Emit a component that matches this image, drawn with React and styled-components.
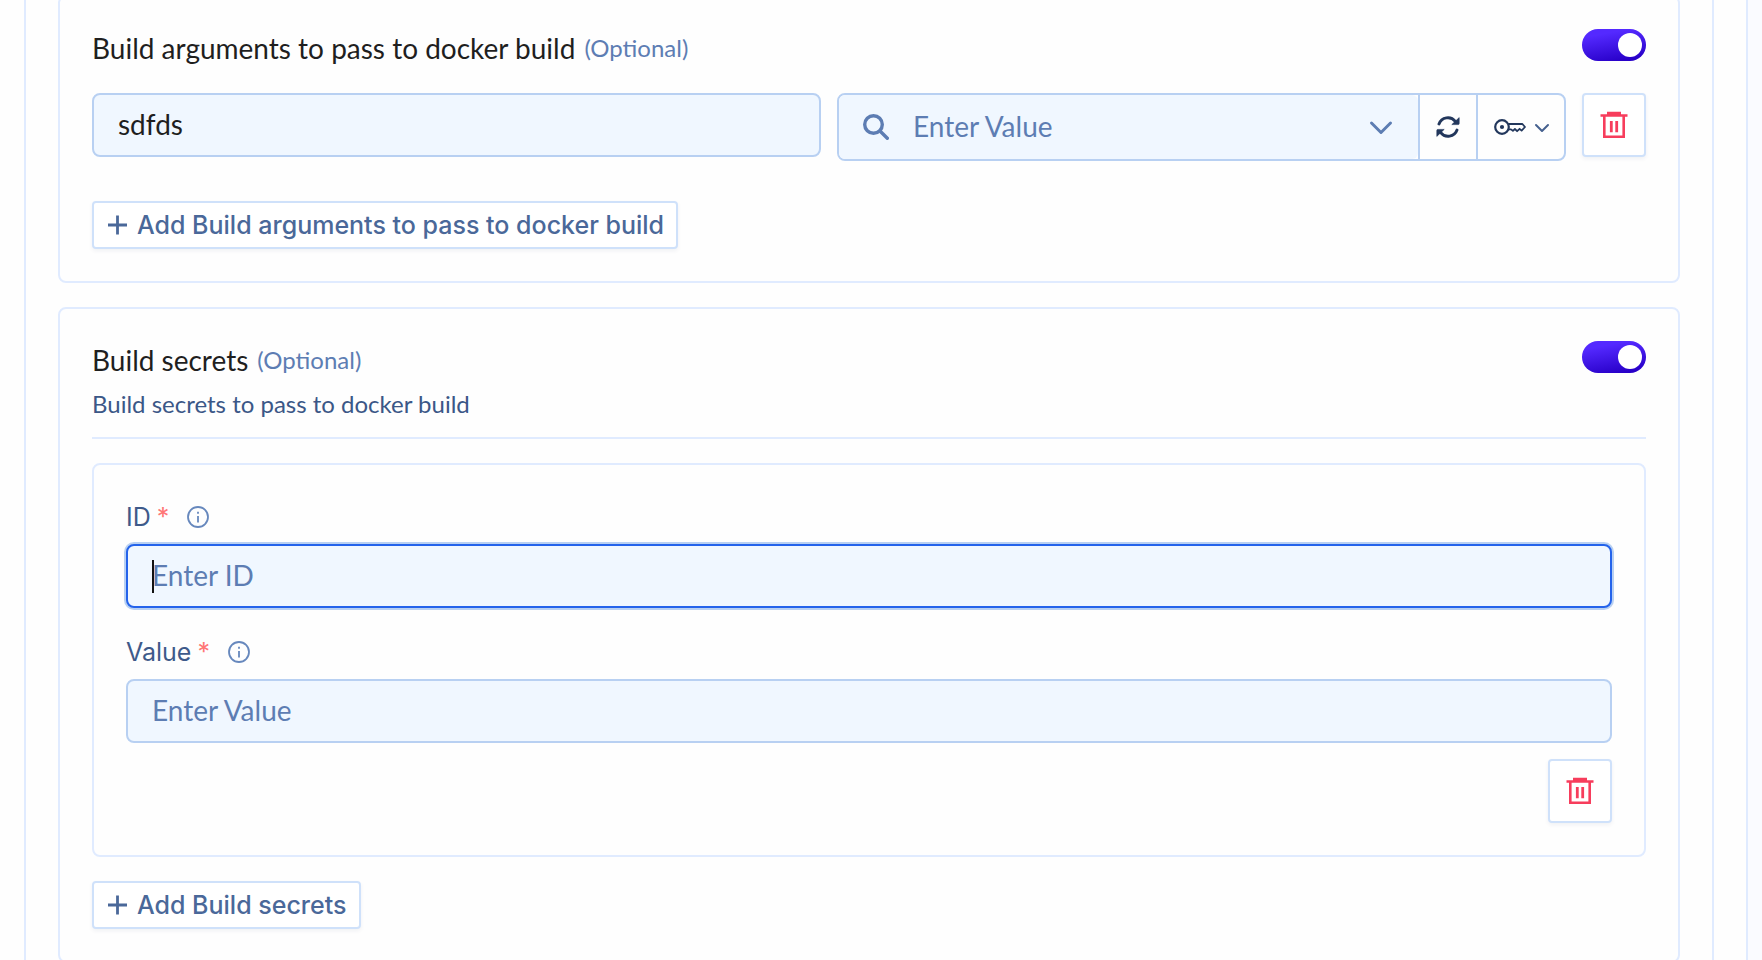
import React, { useState } from 'react';
import styled, { createGlobalStyle } from 'styled-components';

const GlobalStyle = createGlobalStyle`
  *,
  *::before,
  *::after {
    box-sizing: border-box;
  }

  html {
    scrollbar-width: none;
  }

  body {
    margin: 0;
    background: #fafbff;
    font-family: Lato, "Liberation Sans", sans-serif;
    color: #1f1f1f;
  }

  button,
  input {
    margin: 0;
    font-family: inherit;
  }
`;

const Page = styled.div`
  display: flow-root;
  min-height: 100vh;
  margin-right: 14px;
  padding: 0 32px 0 24px;
  background: #fefefe;
  border-right: 2px solid #e0ebff;
  overflow: hidden;
`;

const Panel = styled.main`
  display: flex;
  flex-direction: column;
  gap: 24px;
  /* the first card is scrolled slightly past the top edge */
  margin-top: -5px;
  padding: 0 32px 24px;
  border: 2px solid #e0ebff;
  border-width: 0 2px;
`;

const Card = styled.section`
  padding: 32px;
  border: 2px solid #e0ebff;
  border-radius: 8px;
`;

const CardHeader = styled.header`
  display: flex;
  justify-content: space-between;
  align-items: flex-start;
  margin-bottom: 24px;
  padding-bottom: ${({ $divider }) => ($divider ? '14px' : '2px')};
  border-bottom: ${({ $divider }) => ($divider ? '2px solid #e0ebff' : 'none')};
`;

const Title = styled.h2`
  display: flex;
  align-items: center;
  gap: 9px;
  margin: 0;
  font-size: 28px;
  font-weight: 400;
  line-height: 38px;
`;

const Optional = styled.span`
  font-size: 24px;
  color: #5d7db3;
`;

const Subtitle = styled.p`
  margin: 6px 0 0;
  font-size: 24px;
  line-height: 38px;
  color: #3b5787;
`;

const Toggle = styled.input`
  appearance: none;
  flex: none;
  width: 64px;
  height: 32px;
  padding: 4px;
  border-radius: 16px;
  background: #c5cfdf;
  cursor: pointer;

  &::before {
    content: "";
    display: block;
    width: 24px;
    height: 24px;
    border-radius: 50%;
    background: #fff;
  }

  &:checked {
    background: linear-gradient(170deg, #5429ff 20%, #2800c8 90%);
  }

  &:checked::before {
    margin-left: auto;
  }
`;

const ArgRow = styled.div`
  display: grid;
  grid-template-columns: 1fr 1fr auto;
  align-items: start;
  gap: 16px;
  margin-bottom: 40px;
`;

const TextInput = styled.input`
  display: block;
  width: 100%;
  height: 64px;
  padding: 0 24px 2px;
  border: 2px solid #b8d0f2;
  border-radius: 8px;
  outline: none;
  background: #f0f7ff;
  font-size: 28px;
  color: #1f1f1f;
  caret-color: transparent;

  &::placeholder {
    color: #5d7db3;
    opacity: 1;
  }

  &:focus {
    border-color: #2463eb;
    box-shadow: 0 0 0 2px #b8d0f2;
  }
`;

const InputWrap = styled.div`
  position: relative;
`;

const Caret = styled.span`
  display: none;
  position: absolute;
  top: 16px;
  left: 26px;
  width: 2px;
  height: 33px;
  background: #111;
  pointer-events: none;

  ${TextInput}:focus:placeholder-shown + & {
    display: block;
  }
`;

const Combo = styled.div`
  display: flex;
  min-width: 0;
  height: 68px;
  border: 2px solid #b8d0f2;
  border-radius: 8px;
`;

const ComboField = styled.label`
  display: flex;
  flex: 1;
  align-items: center;
  min-width: 0;
  padding: 0 25px 0 24px;
  border-radius: 6px;
  background: #f0f7ff;
  color: #5d7db3;
`;

const ComboInput = styled.input`
  flex: 1;
  min-width: 0;
  margin-left: 24px;
  padding: 0 0 2px;
  border: none;
  outline: none;
  background: none;
  font-size: 28px;
  color: #1f1f1f;

  &::placeholder {
    color: #5d7db3;
    opacity: 1;
  }
`;

const IconButton = styled.button`
  display: flex;
  flex: none;
  align-items: center;
  padding: 0;
  border: none;
  background: none;
  color: inherit;
  cursor: pointer;
`;

const ComboButton = styled(IconButton)`
  gap: 8px;
  padding: ${({ $wide }) => ($wide ? '0 14px 0 16px' : '0 16px')};
  border-left: 2px solid #b8d0f2;
  color: #22375c;
`;

const outlined = `
  border: 2px solid #cfe1fa;
  border-radius: 4px;
  background: #fff;
  box-shadow: 0 2px 4px rgba(20, 40, 80, 0.06);
  cursor: pointer;
`;

const DeleteButton = styled.button`
  display: flex;
  flex: none;
  justify-content: center;
  align-items: center;
  width: 64px;
  height: 64px;
  padding: 0;
  color: #f73d5c;
  ${outlined}
`;

const AddButton = styled.button`
  display: inline-flex;
  align-items: center;
  gap: 8px;
  height: 48px;
  padding: 0 12px;
  font-size: 25px;
  font-weight: 500;
  color: #4a6899;
  ${outlined}

  && {
    font-family: Inter, sans-serif;
  }
`;

const SecretBox = styled.div`
  display: flex;
  flex-direction: column;
  margin-bottom: 24px;
  padding: 32px;
  border: 2px solid #e0ebff;
  border-radius: 8px;
`;

const Field = styled.div`
  margin-bottom: ${({ $last }) => ($last ? '16px' : '24px')};
`;

const LabelRow = styled.div`
  display: flex;
  align-items: center;
  gap: 18px;
  height: 39px;
  margin-bottom: 8px;
  font-family: Inter, sans-serif;
  font-size: 25px;
  color: #3e5a8a;
`;

const Required = styled.span`
  margin-left: 6px;
  color: #ff7676;
`;

const InfoButton = styled(IconButton)`
  color: #6788bd;
`;

const BoxFooter = styled.div`
  display: flex;
  justify-content: flex-end;
`;

const SearchIcon = () => (
  <svg width="26" height="28" viewBox="0 0 26 28" fill="none" stroke="currentColor" strokeWidth="3.4">
    <circle cx="10.5" cy="11.5" r="8.8" />
    <path d="M17 18l7.3 7.3" strokeLinecap="round" />
  </svg>
);

const ChevronIcon = () => (
  <svg width="24" height="16" viewBox="0 0 24 16" fill="none" stroke="currentColor" strokeWidth="3">
    <path d="M2.5 4L12 13.5 21.5 4" strokeLinecap="round" strokeLinejoin="round" />
  </svg>
);

const SmallChevronIcon = () => (
  <svg width="16" height="12" viewBox="0 0 16 12" fill="none" stroke="#46618f" strokeWidth="2">
    <path d="M2 4l6 6 6-6" strokeLinecap="round" strokeLinejoin="round" />
  </svg>
);

const RefreshIcon = () => (
  <svg width="24" height="22" viewBox="0 0 24 22" fill="none">
    <path
      d="M3 8A9.4 9.4 0 0 1 19.3 5.4M21 14A9.4 9.4 0 0 1 4.7 16.6"
      stroke="currentColor"
      strokeWidth="2.9"
      strokeLinecap="round"
    />
    <path
      d="M23.2 1.6v6q0 1-1 1h-6.4zM.8 20.4v-6q0-1 1-1h6.4z"
      fill="currentColor"
      stroke="currentColor"
      strokeWidth="0.6"
      strokeLinejoin="round"
    />
  </svg>
);

const KeyIcon = () => (
  <svg width="32" height="16" viewBox="0 0 32 16" fill="none">
    <path
      d="M14.2 5H28.4L31 8l-3.4 3.6-2-1.8-2.5 2.4-2.2-2.2-2 1.8-1.9-1.4h-2.7"
      stroke="currentColor"
      strokeWidth="1.8"
      strokeLinejoin="round"
    />
    <circle cx="8" cy="8" r="6.8" stroke="currentColor" strokeWidth="2.2" />
    <circle cx="8" cy="8" r="2.1" fill="currentColor" />
  </svg>
);

const TrashIcon = () => (
  <svg width="28" height="28" viewBox="0 0 28 28" fill="currentColor">
    <path d="M7 .8h14v2.4h6.5v2.6H25V27H3V5.8H.5V3.2H7zM5.6 5.8v18.7h16.8V5.8z" fillRule="evenodd" />
    <path d="M9.9 10h2.8v11.2H9.9zM15.3 10h2.8v11.2h-2.8z" />
  </svg>
);

const PlusIcon = () => (
  <svg width="23" height="22" viewBox="0 0 23 22" stroke="currentColor" strokeWidth="2.8">
    <path d="M2 11h19M11.5 1.5v19" />
  </svg>
);

const InfoIcon = () => (
  <svg width="22" height="22" viewBox="0 0 22 22" fill="none" stroke="currentColor" strokeWidth="1.8">
    <circle cx="11" cy="11" r="10" />
    <path d="M11 10v6.4M11 5.8v2" />
  </svg>
);

const SecretField = ({ id, label, last, autoFocus }) => {
  const [value, setValue] = useState('');

  return (
    <Field $last={last}>
      <LabelRow>
        <label htmlFor={id}>
          {label}
          <Required>*</Required>
        </label>
        <InfoButton type="button" aria-label={`About ${label}`}>
          <InfoIcon />
        </InfoButton>
      </LabelRow>
      <InputWrap>
        <TextInput
          id={id}
          placeholder={`Enter ${label}`}
          value={value}
          onChange={(e) => setValue(e.target.value)}
          autoFocus={autoFocus}
          autoComplete="off"
        />
        <Caret />
      </InputWrap>
    </Field>
  );
};

const App = () => {
  const [argName, setArgName] = useState('sdfds');

  return (
    <>
      <GlobalStyle />
      <Page>
        <Panel>
          <Card>
            <CardHeader>
              <Title>
                Build arguments to pass to docker build
                <Optional>(Optional)</Optional>
              </Title>
              <Toggle type="checkbox" aria-label="Build arguments" defaultChecked />
            </CardHeader>
            <ArgRow>
              <TextInput
                aria-label="Argument name"
                value={argName}
                onChange={(e) => setArgName(e.target.value)}
              />
              <Combo>
                <ComboField>
                  <SearchIcon />
                  <ComboInput aria-label="Argument value" placeholder="Enter Value" />
                  <IconButton type="button" aria-label="Show options">
                    <ChevronIcon />
                  </IconButton>
                </ComboField>
                <ComboButton type="button" aria-label="Refresh">
                  <RefreshIcon />
                </ComboButton>
                <ComboButton type="button" aria-label="Secrets" $wide>
                  <KeyIcon />
                  <SmallChevronIcon />
                </ComboButton>
              </Combo>
              <DeleteButton type="button" aria-label="Delete argument">
                <TrashIcon />
              </DeleteButton>
            </ArgRow>
            <AddButton type="button">
              <PlusIcon />
              Add Build arguments to pass to docker build
            </AddButton>
          </Card>

          <Card>
            <CardHeader $divider>
              <div>
                <Title>
                  Build secrets
                  <Optional>(Optional)</Optional>
                </Title>
                <Subtitle>Build secrets to pass to docker build</Subtitle>
              </div>
              <Toggle type="checkbox" aria-label="Build secrets" defaultChecked />
            </CardHeader>
            <SecretBox>
              <SecretField id="secret-id" label="ID" autoFocus />
              <SecretField id="secret-value" label="Value" last />
              <BoxFooter>
                <DeleteButton type="button" aria-label="Delete secret">
                  <TrashIcon />
                </DeleteButton>
              </BoxFooter>
            </SecretBox>
            <AddButton type="button">
              <PlusIcon />
              Add Build secrets
            </AddButton>
          </Card>
        </Panel>
      </Page>
    </>
  );
};

export default App;
